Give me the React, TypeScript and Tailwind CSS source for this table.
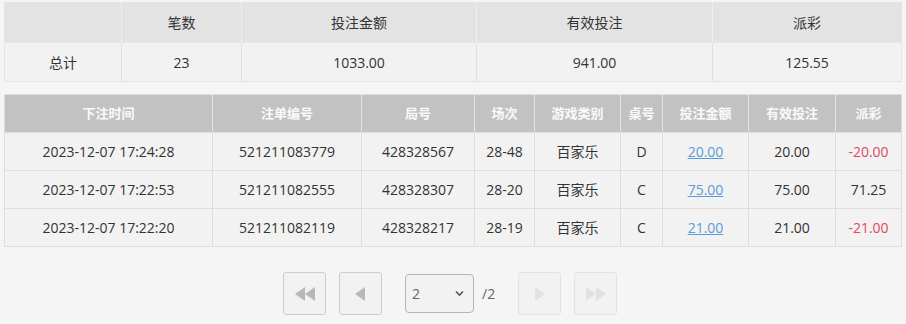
import React from "react";

const font = { fontFamily: '"Open Sans", "Noto Sans CJK SC", sans-serif' };

const summaryCols = [117, 120, 235, 236, 189];
const detailCols = [208, 149, 113, 60, 86, 42, 86, 87, 66];

const rows = [
  { t: "2023-12-07 17:24:28", id: "521211083779", ju: "428328567", ch: "28-48", g: "百家乐", z: "D", amt: "20.00", eff: "20.00", pay: "-20.00", neg: true },
  { t: "2023-12-07 17:22:53", id: "521211082555", ju: "428328307", ch: "28-20", g: "百家乐", z: "C", amt: "75.00", eff: "75.00", pay: "71.25", neg: false },
  { t: "2023-12-07 17:22:20", id: "521211082119", ju: "428328217", ch: "28-19", g: "百家乐", z: "C", amt: "21.00", eff: "21.00", pay: "-21.00", neg: true },
];

function DoubleLeft({ color }: { color: string }) {
  return (
    <svg width="22" height="14" viewBox="0 0 22 14">
      <polygon points="11,0 11,14 1,7" fill={color} />
      <polygon points="21,0 21,14 11,7" fill={color} />
    </svg>
  );
}
function SingleLeft({ color }: { color: string }) {
  return (
    <svg width="11" height="14" viewBox="0 0 11 14">
      <polygon points="10,0 10,14 0,7" fill={color} />
    </svg>
  );
}
function DoubleRight({ color }: { color: string }) {
  return (
    <svg width="22" height="14" viewBox="0 0 22 14">
      <polygon points="1,0 1,14 11,7" fill={color} />
      <polygon points="11,0 11,14 21,7" fill={color} />
    </svg>
  );
}
function SingleRight({ color }: { color: string }) {
  return (
    <svg width="11" height="14" viewBox="0 0 11 14">
      <polygon points="1,0 1,14 11,7" fill={color} />
    </svg>
  );
}

export default function App() {
  return (
    <div className="w-[906px] h-[324px] bg-[#f5f5f5] pt-[2px] pl-[4px] text-[14px] text-[#333]" style={font}>
      <table className="table-fixed border-collapse w-[897px] border border-[#e4e4e4]">
        <colgroup>
          {summaryCols.map((w, i) => (
            <col key={i} style={{ width: w }} />
          ))}
        </colgroup>
        <thead>
          <tr className="h-[40px] bg-[#e3e3e3]">
            {["", "笔数", "投注金额", "有效投注", "派彩"].map((h, i) => (
              <th key={i} className="font-normal text-center border-r border-[#eeeeee] last:border-r-0">
                {h}
              </th>
            ))}
          </tr>
        </thead>
        <tbody>
          <tr className="h-[39px] bg-[#f2f2f2] border-t border-[#e6e6e6]">
            {["总计", "23", "1033.00", "941.00", "125.55"].map((v, i) => (
              <td key={i} className="text-center border-r border-[#e0e0e0] last:border-r-0">
                {v}
              </td>
            ))}
          </tr>
        </tbody>
      </table>

      <table className="table-fixed border-collapse w-[897px] mt-[12px] border border-[#dedede]">
        <colgroup>
          {detailCols.map((w, i) => (
            <col key={i} style={{ width: w }} />
          ))}
        </colgroup>
        <thead>
          <tr className="h-[38px] bg-[#c2c2c2] text-[#fafafa]">
            {["下注时间", "注单编号", "局号", "场次", "游戏类别", "桌号", "投注金额", "有效投注", "派彩"].map((h, i) => (
              <th key={i} className="font-bold text-[13px] text-center border-r border-[#e2e2e2] last:border-r-0">
                {h}
              </th>
            ))}
          </tr>
        </thead>
        <tbody>
          {rows.map((r, i) => (
            <tr key={i} className="h-[38px] bg-[#f2f2f2] border-t border-[#dedede]">
              <td className="text-center border-r border-[#dedede]">{r.t}</td>
              <td className="text-center border-r border-[#dedede]">{r.id}</td>
              <td className="text-center border-r border-[#dedede]">{r.ju}</td>
              <td className="text-center border-r border-[#dedede]">{r.ch}</td>
              <td className="text-center border-r border-[#dedede]">{r.g}</td>
              <td className="text-center border-r border-[#dedede]">{r.z}</td>
              <td className="text-center border-r border-[#dedede]">
                <a className="text-[#5a9bd8] underline">{r.amt}</a>
              </td>
              <td className="text-center border-r border-[#dedede]">{r.eff}</td>
              <td className={"text-center " + (r.neg ? "text-[#e0485e]" : "")}>{r.pay}</td>
            </tr>
          ))}
        </tbody>
      </table>

      <div className="flex items-center mt-[25px] ml-[279px]">
        <button className="w-[43px] h-[43px] flex items-center justify-center border border-[#cccccc] rounded-[3px] bg-[#f2f2f2]">
          <DoubleLeft color="#b8b8b8" />
        </button>
        <button className="w-[43px] h-[43px] flex items-center justify-center border border-[#cccccc] rounded-[3px] bg-[#f2f2f2] ml-[13px]">
          <SingleLeft color="#b8b8b8" />
        </button>
        <div className="relative ml-[23px] w-[69px] h-[39px]">
          <select
            defaultValue="2"
            className="appearance-none w-full h-full border border-[#b5b5b5] rounded-[4px] bg-[#f2f2f2] pl-[6px] text-[14px] text-[#666] outline-none"
            style={font}
          >
            <option value="1">1</option>
            <option value="2">2</option>
          </select>
          <svg className="absolute right-[10px] top-[16px] pointer-events-none" width="9" height="7" viewBox="0 0 9 7">
            <polyline points="1,1.5 4.5,5 8,1.5" fill="none" stroke="#555" strokeWidth="1.6" />
          </svg>
        </div>
        <span className="ml-[8px] text-[#666] text-[14px]">/2</span>
        <button className="w-[43px] h-[43px] flex items-center justify-center border border-[#e3e3e3] rounded-[3px] bg-[#f2f2f2] ml-[23px]">
          <SingleRight color="#e2e2e2" />
        </button>
        <button className="w-[43px] h-[43px] flex items-center justify-center border border-[#e3e3e3] rounded-[3px] bg-[#f2f2f2] ml-[13px]">
          <DoubleRight color="#e2e2e2" />
        </button>
      </div>
    </div>
  );
}
